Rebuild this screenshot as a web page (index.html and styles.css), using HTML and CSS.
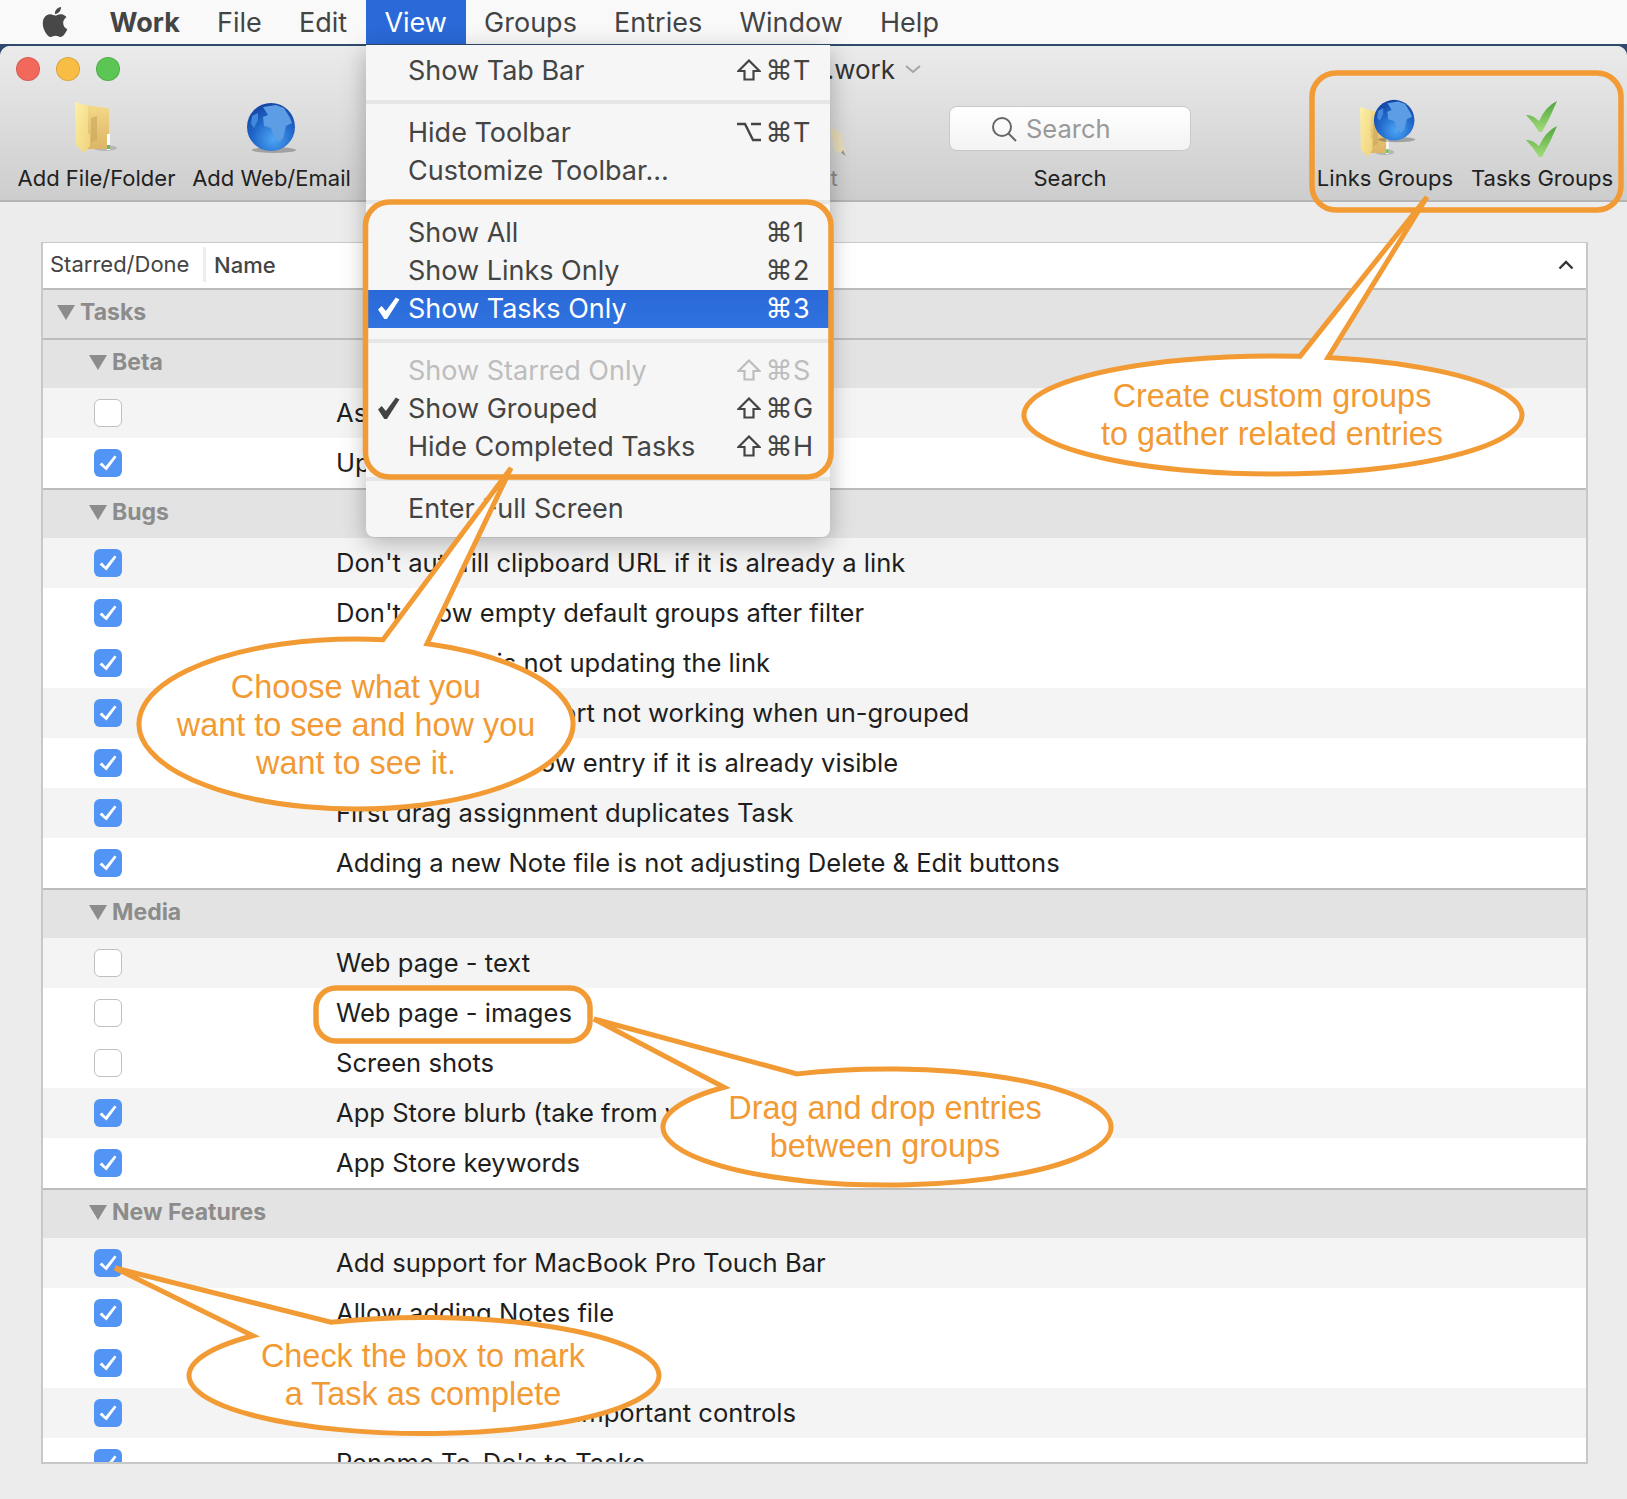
FILE: index.html
```html
<!DOCTYPE html>
<html lang="en">

<head>
    <meta charset="UTF-8">
    <title>Work - View menu</title>
    <link rel="stylesheet" href="styles.css">
</head>

<body>

    <svg class="sprites" width="0" height="0">
        <defs>
            <linearGradient id="folderBack" x1="0" y1="0" x2="0" y2="1">
                <stop offset="0" stop-color="#f3d988" />
                <stop offset="1" stop-color="#dcb565" />
            </linearGradient>
            <linearGradient id="folderFront" x1="0" y1="0" x2="1" y2="1">
                <stop offset="0" stop-color="#fdf0a6" />
                <stop offset="1" stop-color="#efd27c" />
            </linearGradient>
            <radialGradient id="globeFill" cx="0.55" cy="0.75" r="0.8">
                <stop offset="0" stop-color="#4da6f5" />
                <stop offset="0.55" stop-color="#1f66c9" />
                <stop offset="1" stop-color="#123f9c" />
            </radialGradient>
            <linearGradient id="checkFill" x1="0" y1="0" x2="0" y2="1">
                <stop offset="0" stop-color="#4ea63c" />
                <stop offset="1" stop-color="#a3dc7a" />
            </linearGradient>
            <symbol id="tick" viewBox="0 0 28 28">
                <path d="M5.5 15.5 L8 13.5 L11.5 17.5 L20.5 6.5 L22.5 8 L12.5 21.5 Z" fill="#fff" />
            </symbol>
            <symbol id="folder" viewBox="0 0 44 52">
                <ellipse cx="30" cy="46" rx="12" ry="3" fill="#000" opacity="0.15" />
                <path d="M10 3 L32 6 Q34 6 34 9 L34 47 L12 47 Z" fill="url(#folderBack)" />
                <path d="M16 16 L22 14 L22 38 L16 40 Z" fill="#c9a55c" opacity="0.6" />
                <path d="M0 0 L13 4 L13 31 L15 33 L15 44 L9 51 L1 43 Z" fill="url(#folderFront)" />
                <rect x="32" y="32" width="3" height="16" fill="#fff" />
                <rect x="32" y="43" width="3" height="4" fill="#6cbb5a" />
            </symbol>
            <symbol id="globe" viewBox="0 0 52 52">
                <ellipse cx="28" cy="48" rx="22" ry="3" fill="#000" opacity="0.25" />
                <circle cx="25" cy="25" r="24" fill="url(#globeFill)" />
                <path d="M17 5 L30 3 L38 6 L44 16 L46 21 L40 24 L37 36 L33 40 L28 35 L25 26 L18 24 L17 15 L22 13 Z" fill="#5d9de6" />
                <path d="M6 14 L12 11 L12 18 L8 26 L5 22 Z" fill="#4287dc" />
            </symbol>
            <symbol id="double-check" viewBox="0 0 34 58">
                <path d="M1 14 Q7 13 14 20 Q21 5 32 0 Q26 15 17 31 L14 31 Q9 22 1 14 Z" fill="url(#checkFill)" />
                <path d="M1 39 Q7 38 14 45 Q21 30 32 25 Q26 40 17 56 L14 56 Q9 47 1 39 Z" fill="url(#checkFill)" />
            </symbol>
            <symbol id="menu-check" viewBox="0 0 22 22">
                <path d="M1 12 L4.5 8.5 L8.5 13.5 L18 0.5 L21.5 2.5 L9.5 21 L7 21 Z" fill="currentColor" />
            </symbol>
            <symbol id="key-shift" viewBox="0 0 24 22">
                <path d="M12 1.5 L22.5 12 H16.5 V20.5 H7.5 V12 H1.5 Z" fill="none" stroke="currentColor" stroke-width="2.2" />
            </symbol>
            <symbol id="key-option" viewBox="0 0 24 22">
                <path d="M0 3 H8 L16 19 H24 M14 3 H24" fill="none" stroke="currentColor" stroke-width="2.4" />
            </symbol>
        </defs>
    </svg>

    <!-- barra de menu -->
    <header class="menubar">
        <span class="menubar-apple">
            <svg viewBox="0 0 24 24" width="30" height="32">
                <path d="M12.152 6.896c-.948 0-2.415-1.078-3.96-1.04-2.04.027-3.91 1.183-4.961 3.014-2.117 3.675-.546 9.103 1.519 12.09 1.013 1.454 2.208 3.09 3.792 3.039 1.52-.065 2.09-.987 3.935-.987 1.831 0 2.35.987 3.96.948 1.637-.026 2.676-1.48 3.676-2.948 1.156-1.688 1.636-3.325 1.662-3.415-.039-.013-3.182-1.221-3.22-4.857-.026-3.04 2.48-4.494 2.597-4.559-1.429-2.09-3.623-2.324-4.39-2.376-2-.156-3.675 1.09-4.61 1.09zM15.53 3.83c.843-1.012 1.4-2.427 1.245-3.83-1.207.052-2.662.805-3.532 1.818-.78.896-1.454 2.338-1.273 3.714 1.338.104 2.715-.688 3.559-1.701" fill="#484848" />
            </svg>
        </span>
        <span class="menubar-item app-name">Work</span>
        <span class="menubar-item">File</span>
        <span class="menubar-item">Edit</span>
        <span class="menubar-item active">View</span>
        <span class="menubar-item">Groups</span>
        <span class="menubar-item">Entries</span>
        <span class="menubar-item">Window</span>
        <span class="menubar-item">Help</span>
    </header>

    <div class="window">
        <div class="window-top">
            <div class="titlebar">
                <span class="light light-red"></span>
                <span class="light light-yellow"></span>
                <span class="light light-green"></span>
                <span class="window-title">.work</span>
                <svg class="title-chevron" viewBox="0 0 16 9" width="16" height="9">
                    <path d="M1 1 L8 7 L15 1" fill="none" stroke="#a5a5a5" stroke-width="2" />
                </svg>
            </div>

            <div class="toolbar">
                <div class="tool">
                    <svg class="tool-icon" width="44" height="52"><use href="#folder" /></svg>
                    <span class="tool-label">Add File/Folder</span>
                </div>
                <div class="tool">
                    <svg class="tool-icon" width="52" height="52"><use href="#globe" /></svg>
                    <span class="tool-label">Add Web/Email</span>
                </div>
                <div class="tool tool-edit">
                    <svg class="tool-icon" viewBox="0 0 60 60" width="60" height="60">
                        <path d="M42 27 L53 33 L58 56 L46 50 Z" fill="#e8dcba" />
                        <path d="M55 50 L58 56 L53 53 Z" fill="#9a9a9a" />
                    </svg>
                    <span class="tool-label tool-disabled">Edit</span>
                </div>
                <div class="tool tool-search">
                    <div class="searchbox">
                        <svg viewBox="0 0 26 26" width="26" height="26">
                            <circle cx="11" cy="11" r="9" fill="none" stroke="#666" stroke-width="2" />
                            <path d="M17.5 17.5 L25 25" stroke="#666" stroke-width="2" />
                        </svg>
                        <span>Search</span>
                    </div>
                    <span class="tool-label">Search</span>
                </div>
                <div class="tool tool-links">
                    <div class="links-icon">
                        <svg class="links-folder" width="36" height="51" viewBox="0 0 44 52" preserveAspectRatio="none"><use href="#folder" /></svg>
                        <svg class="links-globe" width="44" height="44"><use href="#globe" /></svg>
                    </div>
                    <span class="tool-label">Links Groups</span>
                </div>
                <div class="tool tool-tasks">
                    <svg class="tool-icon" width="34" height="58"><use href="#double-check" /></svg>
                    <span class="tool-label">Tasks Groups</span>
                </div>
            </div>
        </div>

        <main class="content">
            <div class="table">
                <div class="table-head">
                    <span class="col-done">Starred/Done</span>
                    <span class="col-name">Name</span>
                    <svg class="sort-caret" viewBox="0 0 16 10" width="16" height="10">
                        <path d="M1.5 8.5 L8 2 L14.5 8.5" fill="none" stroke="#333" stroke-width="2.4" />
                    </svg>
                </div>

                <div class="group level-1"><i class="triangle"></i>Tasks</div>

                <div class="group"><i class="triangle"></i>Beta</div>
                <div class="row"><span class="box"></span><span class="row-name">Assign task groups</span></div>
                <div class="row"><span class="box checked"><svg width="28" height="28"><use href="#tick" /></svg></span><span class="row-name">Update help pages</span></div>

                <div class="group"><i class="triangle"></i>Bugs</div>
                <div class="row"><span class="box checked"><svg width="28" height="28"><use href="#tick" /></svg></span><span class="row-name">Don't autofill clipboard URL if it is already a link</span></div>
                <div class="row"><span class="box checked"><svg width="28" height="28"><use href="#tick" /></svg></span><span class="row-name">Don't show empty default groups after filter</span></div>
                <div class="row"><span class="box checked"><svg width="28" height="28"><use href="#tick" /></svg></span><span class="row-name">Editing URLs is not updating the link</span></div>
                <div class="row"><span class="box checked"><svg width="28" height="28"><use href="#tick" /></svg></span><span class="row-name">Drag and drop import not working when un-grouped</span></div>
                <div class="row"><span class="box checked"><svg width="28" height="28"><use href="#tick" /></svg></span><span class="row-name">Don't scroll to show entry if it is already visible</span></div>
                <div class="row"><span class="box checked"><svg width="28" height="28"><use href="#tick" /></svg></span><span class="row-name">First drag assignment duplicates Task</span></div>
                <div class="row"><span class="box checked"><svg width="28" height="28"><use href="#tick" /></svg></span><span class="row-name">Adding a new Note file is not adjusting Delete &amp; Edit buttons</span></div>

                <div class="group"><i class="triangle"></i>Media</div>
                <div class="row"><span class="box"></span><span class="row-name">Web page - text</span></div>
                <div class="row"><span class="box"></span><span class="row-name">Web page - images</span></div>
                <div class="row"><span class="box"></span><span class="row-name">Screen shots</span></div>
                <div class="row"><span class="box checked"><svg width="28" height="28"><use href="#tick" /></svg></span><span class="row-name">App Store blurb (take from website)</span></div>
                <div class="row"><span class="box checked"><svg width="28" height="28"><use href="#tick" /></svg></span><span class="row-name">App Store keywords</span></div>

                <div class="group"><i class="triangle"></i>New Features</div>
                <div class="row"><span class="box checked"><svg width="28" height="28"><use href="#tick" /></svg></span><span class="row-name">Add support for MacBook Pro Touch Bar</span></div>
                <div class="row"><span class="box checked"><svg width="28" height="28"><use href="#tick" /></svg></span><span class="row-name">Allow adding Notes file</span></div>
                <div class="row"><span class="box checked"><svg width="28" height="28"><use href="#tick" /></svg></span><span class="row-name">Add Touch Bar icons</span></div>
                <div class="row"><span class="box checked"><svg width="28" height="28"><use href="#tick" /></svg></span><span class="row-name">Add tooltips for the important controls</span></div>
                <div class="row"><span class="box checked"><svg width="28" height="28"><use href="#tick" /></svg></span><span class="row-name">Rename To-Do's to Tasks</span></div>
            </div>
        </main>
    </div>

    <!-- menu View aberto -->
    <nav class="dropdown">
        <div class="menu-line"><span>Show Tab Bar</span><span class="keys"><b><svg class="key-icon" width="24" height="22"><use href="#key-shift" /></svg></b><b>⌘</b><b>T</b></span></div>
        <hr>
        <div class="menu-line"><span>Hide Toolbar</span><span class="keys"><b><svg class="key-icon" width="24" height="22"><use href="#key-option" /></svg></b><b>⌘</b><b>T</b></span></div>
        <div class="menu-line"><span>Customize Toolbar...</span></div>
        <hr class="sep-tight">
        <div class="menu-line"><span>Show All</span><span class="keys"><b></b><b>⌘</b><b>1</b></span></div>
        <div class="menu-line"><span>Show Links Only</span><span class="keys"><b></b><b>⌘</b><b>2</b></span></div>
        <div class="menu-line selected"><svg class="menu-check" width="23" height="23"><use href="#menu-check" /></svg><span>Show Tasks Only</span><span class="keys"><b></b><b>⌘</b><b>3</b></span></div>
        <hr>
        <div class="menu-line disabled"><span>Show Starred Only</span><span class="keys"><b><svg class="key-icon" width="24" height="22"><use href="#key-shift" /></svg></b><b>⌘</b><b>S</b></span></div>
        <div class="menu-line"><svg class="menu-check" width="23" height="23"><use href="#menu-check" /></svg><span>Show Grouped</span><span class="keys"><b><svg class="key-icon" width="24" height="22"><use href="#key-shift" /></svg></b><b>⌘</b><b>G</b></span></div>
        <div class="menu-line"><span>Hide Completed Tasks</span><span class="keys"><b><svg class="key-icon" width="24" height="22"><use href="#key-shift" /></svg></b><b>⌘</b><b>H</b></span></div>
        <hr>
        <div class="menu-line"><span>Enter Full Screen</span></div>
    </nav>

    <!-- anotações em laranja por cima de tudo -->
    <svg class="notes" viewBox="0 0 1627 1499" width="1627" height="1499">
        <rect class="note-frame" x="365.5" y="202" width="465.5" height="275" rx="24" />
        <rect class="note-frame" x="1312" y="73" width="309" height="137" rx="24" />
        <rect class="note-frame" x="316" y="988" width="274" height="53" rx="20" />

        <path class="note-bubble" d="M1328 357.46 A249 59 0 1 1 1300 356.35 L1427 197 Z" />
        <text class="note-text" x="1272" y="407">Create custom groups</text>
        <text class="note-text" x="1272" y="445">to gather related entries</text>

        <path class="note-bubble" d="M427 643.68 A217 85 0 1 1 383 639.66 L511 468 Z" />
        <text class="note-text" x="356" y="698">Choose what you</text>
        <text class="note-text" x="356" y="736">want to see and how you</text>
        <text class="note-text" x="356" y="774">want to see it.</text>

        <path class="note-bubble" d="M797 1073.89 A224 58 0 1 1 724 1087.22 L594 1019 Z" />
        <text class="note-text" x="885" y="1119">Drag and drop entries</text>
        <text class="note-text" x="885" y="1157">between groups</text>

        <path class="note-bubble" d="M331 1322.24 A235 58 0 1 1 253 1335.72 L115 1268 Z" />
        <text class="note-text" x="423" y="1367">Check the box to mark</text>
        <text class="note-text" x="423" y="1405">a Task as complete</text>
    </svg>

</body>

</html>
```

FILE: styles.css
```css
/* RESET */
* {
    margin: 0;
    padding: 0;
    box-sizing: border-box;
}

html,
body {
    width: 1627px;
    height: 1499px;
    overflow: hidden;
}

body {
    position: relative;
    font-family: 'Inter', 'Roboto', sans-serif;
    background-color: #2f4a6d;
    color: #333;
}

.sprites {
    position: absolute;
}

/* BARRA DE MENU */
.menubar {
    display: flex;
    align-items: stretch;
    height: 46px;
    padding-left: 40px;
    background-color: #f9f9f9;
    font-size: 27px;
    color: #444;
    border-bottom: 2px solid #2f4a6d;
}

.menubar-apple {
    display: flex;
    align-items: center;
    width: 51px;
}

.menubar-item {
    display: flex;
    align-items: center;
    padding: 0 18.6px;
}

.menubar-item.app-name {
    font-weight: 700;
}

.menubar-item.active {
    background-color: #2a69d8;
    color: #fff;
}

/* JANELA */
.window {
    height: 1453px;
    border-radius: 10px 10px 0 0;
    overflow: hidden;
    background-color: #ececec;
}

.window-top {
    height: 156px;
    background: linear-gradient(#ebebeb, #cdcdcd);
    border-bottom: 2px solid #b5b5b5;
}

.titlebar {
    display: flex;
    align-items: center;
    height: 46px;
    padding-left: 16px;
}

.light {
    width: 24px;
    height: 24px;
    margin-right: 16px;
    border-radius: 50%;
    border: 1px solid rgba(0, 0, 0, 0.12);
}

.light-red {
    background-color: #f2695c;
}

.light-yellow {
    background-color: #f8bd45;
}

.light-green {
    background-color: #5bc653;
}

.window-title {
    width: 759px;
    text-align: right;
    font-size: 26px;
    color: #333;
    white-space: nowrap;
}

.title-chevron {
    margin-left: 10px;
}

/* TOOLBAR */
.toolbar {
    display: flex;
    padding-left: 9px;
}

.tool {
    position: relative;
    width: 175px;
    height: 105px;
    display: flex;
    flex-direction: column;
    align-items: center;
    white-space: nowrap;
}

.tool-icon {
    margin-top: 6px;
    height: 60px;
}

.tool-label {
    position: absolute;
    top: 71px;
    font-size: 22px;
    line-height: 30px;
    color: #222;
}

.tool-disabled {
    color: #8a8a8a;
}

.tool-edit {
    width: 100px;
    margin-left: 409px;
}

.tool-edit .tool-icon,
.tool-tasks .tool-icon {
    margin-top: 8px;
}

.tool-search {
    width: 242px;
    margin-left: 81px;
}

.tool-links {
    width: 150px;
    margin-left: 119px;
}

.tool-tasks {
    width: 150px;
    margin-left: 7px;
}

.searchbox {
    display: flex;
    align-items: center;
    width: 242px;
    height: 45px;
    margin-top: 14px;
    padding-left: 41px;
    gap: 9px;
    background: linear-gradient(#fff, #f3f3f3);
    border: 1px solid #c9c9c9;
    border-radius: 8px;
    font-size: 25.5px;
    color: #999;
}

.links-icon {
    display: flex;
    width: 100px;
    height: 60px;
}

.links-folder {
    flex: none;
    margin: 15px 0 0 25px;
}

.links-globe {
    flex: none;
    margin: 7px 0 0 -23px;
}

/* TABELA */
.content {
    padding: 40px 39px 0 41px;
}

.table {
    height: 1222px;
    overflow: hidden;
    background-color: #fff;
    border: 2px solid #c8c8c8;
    border-top-width: 1px;
}

.table-head {
    display: flex;
    align-items: center;
    height: 45px;
    padding-bottom: 2px;
    font-size: 22px;
    color: #444;
}

.col-done {
    width: 163px;
    padding-left: 7px;
    border-right: 3px solid #ededed;
    line-height: 35px;
}

.col-name {
    padding-left: 8px;
    font-weight: 500;
}

.sort-caret {
    margin-left: auto;
    margin-right: 12px;
}

.group {
    height: 50px;
    padding-left: 46px;
    border-top: 2px solid #bcbcbc;
    background-color: #e3e3e3;
    font-size: 23px;
    font-weight: 700;
    line-height: 44px;
    color: #8c8c8c;
}

.group.level-1 {
    padding-left: 14px;
}

.triangle {
    display: inline-block;
    width: 0;
    height: 0;
    margin-right: 5px;
    border-left: 9px solid transparent;
    border-right: 9px solid transparent;
    border-top: 15px solid #8c8c8c;
}

.row {
    display: flex;
    align-items: center;
    height: 50px;
    padding-left: 51px;
    font-size: 25.6px;
    color: #1e1e1e;
}

.group + .row,
.row + .row + .row:nth-child(even) {
    background-color: #f4f4f4;
}

.box {
    flex: none;
    width: 28px;
    height: 28px;
    background-color: #fff;
    border: 1px solid #c0c0c0;
    border-radius: 6px;
}

.box.checked {
    background-color: #5295f5;
    border: none;
}

.box svg {
    display: block;
}

.row-name {
    margin: -2px 0 0 214px;
    white-space: nowrap;
}

/* MENU SUSPENSO */
.dropdown {
    position: absolute;
    left: 366px;
    top: 45px;
    width: 464px;
    padding: 6px 0 9px;
    background-color: #f6f6f6;
    border-radius: 0 0 8px 8px;
    box-shadow: 0 6px 24px rgba(0, 0, 0, 0.28);
    font-size: 27px;
    color: #444;
}

.dropdown hr {
    height: 4px;
    margin: 11px 0 9px;
    border: none;
    background-color: #e6e6e6;
}

.dropdown hr.sep-tight {
    margin-bottom: 10px;
}

.menu-line {
    position: relative;
    display: flex;
    justify-content: space-between;
    align-items: center;
    height: 38px;
    padding-left: 42px;
}

.sep-tight ~ .menu-line {
    padding-bottom: 2px;
}

.menu-line.selected {
    background: linear-gradient(#2a69d8, #2f72e0);
    color: #fff;
}

.menu-line.disabled {
    color: #bdbdbd;
}

.menu-check {
    position: absolute;
    left: 11px;
    top: 7px;
}

.keys {
    display: flex;
    align-items: center;
}

.keys b {
    width: 28px;
    font-family: 'DejaVu Sans', sans-serif;
    font-weight: 400;
    text-align: center;
}

.keys b:last-child {
    width: 37px;
    font-family: 'Inter', sans-serif;
    text-align: left;
}

.key-icon {
    display: block;
}

/* ANOTAÇÕES */
.notes {
    position: absolute;
    left: 0;
    top: 0;
    pointer-events: none;
}

.note-frame {
    fill: none;
    stroke: #f29a33;
    stroke-width: 5.5;
}

.note-bubble {
    fill: #fff;
    stroke: #f29a33;
    stroke-width: 5;
    stroke-linejoin: miter;
    stroke-miterlimit: 5;
}

.note-text {
    font-family: 'Liberation Sans', sans-serif;
    font-size: 32.4px;
    fill: #f29a33;
    text-anchor: middle;
}
```
